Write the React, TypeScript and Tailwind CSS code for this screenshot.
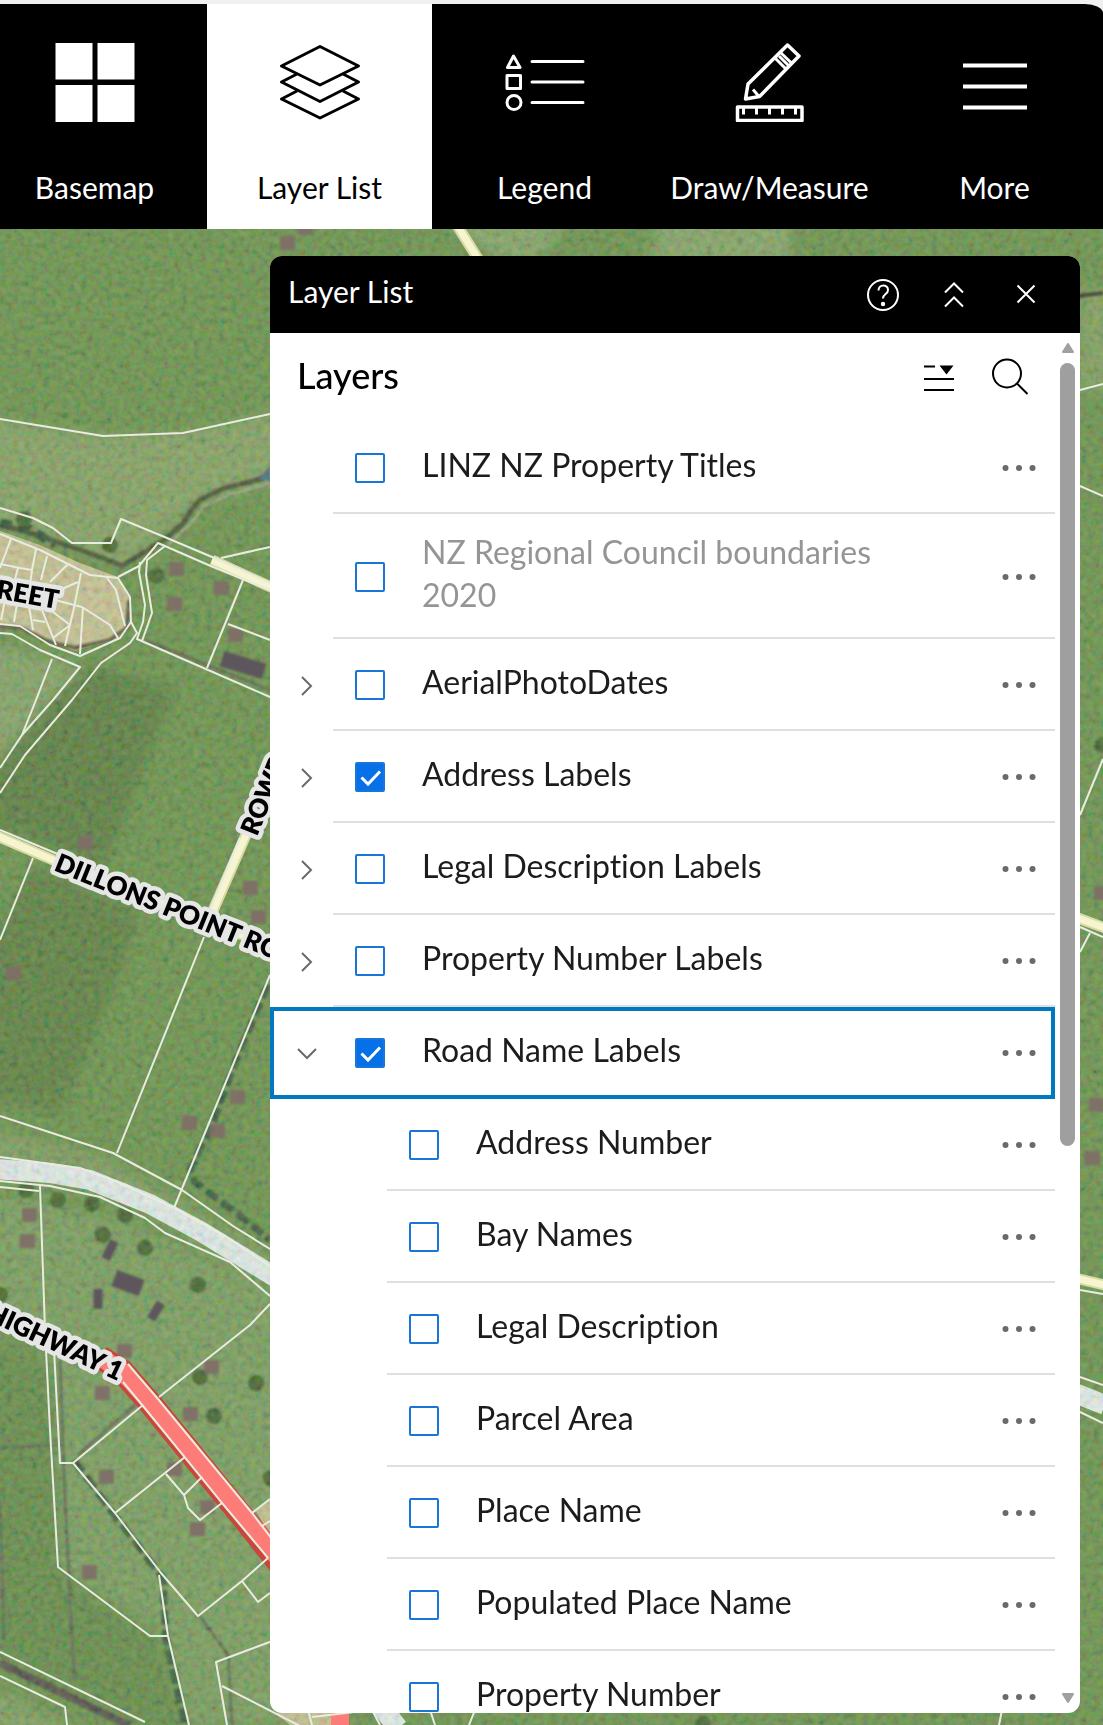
import { useState } from 'react';
import type { ReactNode } from 'react';

interface Layer {
  id: string;
  title: string;
  checked?: boolean;
  dimmed?: boolean;
  children?: Layer[];
}

const LAYERS: Layer[] = [
  { id: 'titles', title: 'LINZ NZ Property Titles' },
  { id: 'council', title: 'NZ Regional Council boundaries 2020', dimmed: true },
  { id: 'photo', title: 'AerialPhotoDates', children: [] },
  { id: 'address', title: 'Address Labels', checked: true, children: [] },
  { id: 'legal', title: 'Legal Description Labels', children: [] },
  { id: 'number', title: 'Property Number Labels', children: [] },
  {
    id: 'road',
    title: 'Road Name Labels',
    checked: true,
    children: [
      { id: 'road-address', title: 'Address Number' },
      { id: 'road-bay', title: 'Bay Names' },
      { id: 'road-legal', title: 'Legal Description' },
      { id: 'road-parcel', title: 'Parcel Area' },
      { id: 'road-place', title: 'Place Name' },
      { id: 'road-populated', title: 'Populated Place Name' },
      { id: 'road-property', title: 'Property Number' },
    ],
  },
];

const HOUSES: [number, number][] = [
  [176, 569], [221, 588], [174, 604], [235, 635], [85, 843], [13, 973], [250, 888], [258, 917],
  [237, 1097], [189, 1123], [217, 1131], [29, 1215], [27, 1241], [124, 1351], [211, 1367],
  [102, 1393], [190, 1414], [106, 1477], [174, 1469], [207, 1507], [197, 1529], [89, 1572],
  [305, 228], [287, 243], [1101, 893], [1096, 1105], [1092, 1158],
];

const TREES: [number, number][] = [
  [103, 1235], [145, 1248], [198, 1285], [200, 1377], [256, 1383], [214, 1416], [58, 1200],
  [92, 1204], [125, 1215], [156, 576], [110, 545], [24, 519], [26, 1190], [703, 1724], [1103, 745],
  [271, 1478], [0, 1295],
];

// x, y, width, height, rotation
const BARNS: [number, number, number, number, number][] = [
  [243, 665, 44, 16, 17],
  [128, 1283, 29, 17, 20],
  [110, 1250, 9, 20, 25],
  [98, 1299, 9, 20, 0],
  [156, 1311, 9, 19, 32],
];

const PARCELS = [
  'M0 419 103 436 183 433 270 414',
  'M0 508 33 518 53 528 72 543 111 543 121 519 167 538 212 557 270 583',
  'M221 558 270 547',
  'M118 577 139 566 158 543 213 567 270 590',
  'M140 562 139 572 145 605 143 622 137 639 270 697',
  'M165 546 147 560 146 575 152 613 142 641',
  'M243 580 207 668M228 624 270 640',
  'M0 534 40 550 90 575 118 578 130 597 131 622 120 638 80 656 50 645 20 626 0 624',
  'M0 633 12 634 40 650 80 667 53 700 22 735 0 768',
  'M52 659 36 700 22 735',
  'M131 622 137 633 130 643 101 663 72 700 25 755 0 793',
  'M11 539 0 568M36 549 32 570 28 600 33 630M0 564 20 568 32 570M18 568 12 590M47 556 41 580M68 564 50 582M81 573 73 612 65 646M53 593 78 582M55 600 82 607 110 625 118 638M83 607 80 654M53 612 70 625 53 638M42 610 56 645M5 600 1 620M17 604 14 622M33 620 45 622M107 578 116 590 125 626',
  'M33 858 0 940M204 937 117 1153M270 975 174 1208',
  'M0 830 60 855M240 838 210 910',
  'M0 1116 113 1153 182 1190 233 1226 270 1249',
  'M0 1157 80 1168 120 1183 174 1208 225 1236 270 1266',
  'M0 1181 50 1186 100 1197 145 1218 165 1233 230 1262 270 1296',
  'M0 1187 39 1191M40 1186 45 1330 50 1430 58 1567 150 1636 168 1636',
  'M54 1350 60 1463 73 1463 143 1405M270 1304 250 1325 159 1397',
  'M73 1463 115 1513 161 1573 198 1616 242 1581 268 1558M242 1581 258 1602 270 1593',
  'M115 1513 185 1457M166 1474 184 1495 188 1508 200 1520 222 1503M184 1495 202 1477',
  'M159 1575 168 1636 189 1725M0 1652 145 1722M0 1676 65 1707 67 1725',
  'M275 1640 216 1662 227 1725M222 1686 300 1726',
  'M128 1364 158 1399 252 1513 275 1543M123 1382 143 1406 222 1503 268 1558',
  'M252 1513 270 1499M262 1526 270 1521',
  'M1080 390 1103 384M1080 486 1103 496M1080 815 1103 759M1080 927 1103 937M1080 952 1090 933',
  'M1080 1290 1103 1294M1080 1377 1103 1385M1080 1412 1103 1423',
  'M430 1710 435 1725M475 1710 469 1725M1002 1710 999 1725M308 1710 312 1725M312 1717 372 1710 380 1725',
];

function MapLabel({ x, y, angle, end, children }: { x: number; y: number; angle: number; end?: boolean; children: string }) {
  return (
    <text
      transform={`translate(${x} ${y}) rotate(${angle})`}
      textAnchor={end ? 'end' : 'start'}
      className="fill-black stroke-[#e6e6e6] text-[26px] font-extrabold"
      strokeWidth="9"
      strokeLinejoin="round"
      paintOrder="stroke"
    >
      {children}
    </text>
  );
}

function AerialMap() {
  return (
    <svg
      viewBox="0 229 1103 1496"
      preserveAspectRatio="xMinYMin slice"
      className="absolute inset-0 h-full w-full"
      role="img"
      aria-label="Aerial map"
    >
      <defs>
        <filter id="grass" x="0" y="0" width="100%" height="100%">
          <feTurbulence type="fractalNoise" baseFrequency="0.16" numOctaves="3" seed="4" />
          <feColorMatrix values="1.8 0 0 0 -0.35  0 1.3 0 0 -0.15  0 0 1.2 0 -0.22  0 0 0 0 0.2" />
        </filter>
        <filter id="soft" x="-20%" y="-20%" width="140%" height="140%">
          <feGaussianBlur stdDeviation="1.3" />
        </filter>
        <filter id="field" x="-20%" y="-20%" width="140%" height="140%">
          <feGaussianBlur stdDeviation="6" />
        </filter>
      </defs>

      <rect y="229" width="1103" height="1496" fill="#628e48" />
      <g filter="url(#field)">
        <path d="M-20 419 103 436 183 433 290 410V480L200 500 122 566 60 540-20 520Z" fill="#7d9e61" />
        <path d="M-20 640 80 667 0 780-20 780Z" fill="#7b9f63" />
        <path d="M60 690 90 665 175 690 150 750 105 870-20 820V780Z" fill="#537a3d" />
        <path d="M33 865 140 915 110 1000 60 1115-20 1095V960Z" fill="#557c3e" />
        <path d="M-20 1125 110 1160 270 1255V1290L130 1200-20 1170Z" fill="#77985b" />
        <path d="M-20 1190 120 1220 290 1300V1725H190L168 1636 58 1567 45 1340-20 1320Z" fill="#71995a" />
        <path d="M-20 1340 55 1370 60 1567 150 1636 185 1725H130L-20 1650Z" fill="#5b8744" />
        <path d="M0 1690 100 1740H-20Z" fill="#769a5d" />
        <path d="M430 215H570L540 260H500ZM660 215H790V262H650Z" fill="#7ba063" />
        <path d="M1080 290H1110V390H1080Z" fill="#799b5c" />
      </g>

      <path d="M0 531 40 545 80 563 118 577 129 597 130 625 115 640 75 651 45 639 20 625 0 624Z" fill="#c2c092" />
      <path d="M275 1713H335V1725H290ZM256 1511 270 1500V1535Z" fill="#bebc8f" />

      <g fill="none" filter="url(#soft)">
        <path d="M264 478 225 488 200 500 190 512 182 525 165 539 145 552 122 566 100 557 60 543 30 533 0 525" stroke="#3f4d30" strokeWidth="5" />
        <path d="M270 483 228 495 204 506 190 524 168 545" stroke="#a3a78c" strokeWidth="2" />
        <path d="M0 626 20 628 50 642 75 648 110 640 127 628 129 600" stroke="#54573c" strokeWidth="4" />
        <path d="M145 640 200 662 270 690" stroke="#556049" strokeWidth="3" />
        <path d="M268 985 240 1050 210 1130 190 1170 195 1182 235 1212 270 1240" stroke="#31563a" strokeWidth="7" strokeDasharray="14 5" />
        <path d="M74 1460 115 1516 163 1578 166 1640 185 1725" stroke="#31583a" strokeWidth="7" strokeDasharray="15 5" />
        <path d="M0 523 30 529 55 545" stroke="#2b4f31" strokeWidth="9" strokeDasharray="12 7" />
        <path d="M60 1360 65 1500 72 1640 75 1680M0 1448 62 1445M0 1500 4 1640M200 1616 228 1655 232 1725M78 1455 135 1405" stroke="#536750" strokeWidth="3" />
        <path d="M0 1663 70 1697 130 1726" stroke="#4b4c47" strokeWidth="8" />
        <path d="M1078 296 1103 293" stroke="#2f3525" strokeWidth="4" />
      </g>
      <path d="M258 479 270 466V481Z" fill="#3d6283" filter="url(#soft)" />
      <g fill="#3b5f2b" filter="url(#soft)">
        {TREES.map(([x, y]) => (
          <circle key={`${x}-${y}`} cx={x} cy={y} r="8" />
        ))}
      </g>
      <path d="M-5 1169 50 1173 90 1180 150 1204 200 1231 275 1277M1075 1393 1105 1405M380 1705 398 1728" fill="none" stroke="#deecec" strokeWidth="20" />

      <rect y="229" width="1103" height="1496" filter="url(#grass)" />

      <g fill="#806d68" opacity="0.9" filter="url(#soft)">
        {HOUSES.map(([x, y]) => (
          <rect key={`${x}-${y}`} x={x - 7} y={y - 7} width="15" height="14" />
        ))}
      </g>
      <g fill="#5d575b" filter="url(#soft)">
        {BARNS.map(([x, y, w, h, r]) => (
          <rect key={`${x}-${y}`} x={x - w / 2} y={y - h / 2} width={w} height={h} transform={`rotate(${r} ${x} ${y})`} />
        ))}
      </g>

      <g fill="none">
        <path d="M-5 835 53 860 270 946M246 835 212 913M212 560 275 589M455 222 480 262M1075 917 1105 928M1075 1278 1105 1285" stroke="#d9dba6" strokeWidth="11" />
        <path d="M-5 835 53 860 270 946M246 835 212 913M212 560 275 589M455 222 480 262M1075 917 1105 928M1075 1278 1105 1285" stroke="#f6f5d0" strokeWidth="7" />
        <path d="M100 1357 122 1371 150 1403 237 1510 280 1564" stroke="#c8473a" strokeWidth="24" />
        <path d="M100 1357 122 1371 150 1402 238 1508 280 1560M340 1705V1728" stroke="#fd7c77" strokeWidth="18" />
        <g stroke="#e9ece0" strokeWidth="2" strokeLinejoin="round">
          {PARCELS.map(d => (
            <path key={d} d={d} />
          ))}
        </g>
      </g>

      <MapLabel x={57} y={609} angle={10} end>REET</MapLabel>
      <MapLabel x={257} y={837} angle={-68}>ROWD</MapLabel>
      <MapLabel x={53} y={870} angle={22}>DILLONS POINT ROAD</MapLabel>
      <MapLabel x={118} y={1381} angle={25} end>HIGHWAY 1</MapLabel>
    </svg>
  );
}

function ToolIcon({ children }: { children: ReactNode }) {
  return (
    <svg viewBox="0 0 84 80" className="h-20 w-21" fill="none" stroke="currentColor" strokeWidth="3" strokeLinejoin="round" aria-hidden="true">
      {children}
    </svg>
  );
}

const TOOLS: { label: string; inset?: string; icon: ReactNode }[] = [
  {
    label: 'Basemap',
    inset: 'pr-[18px]',
    icon: <path fill="currentColor" stroke="none" d="M2.500 1h37v36.500h-37zM44.500 1h37v36.500h-37zM2.500 43h37v37h-37zM44.500 43h37v37h-37z" />,
  },
  {
    label: 'Layer List',
    icon: <path d="M42 4.500 3.500 24 42 43 80.500 24ZM19 32 3.500 40 42 59.500 80.500 40 65 32M19 49 3.500 57 42 76 80.500 57 65 49" />,
  },
  {
    label: 'Legend',
    icon: (
      <>
        <path d="M10.500 14 4.500 25.500h12.500zM4 33.500h13.500v13H4z" />
        <circle cx="11" cy="60.500" r="7" />
        <path strokeLinecap="round" d="M29 19.500h51M29 40h51M29 60.500h51" />
      </>
    ),
  },
  {
    label: 'Draw/Measure',
    icon: (
      <>
        <path strokeWidth="3.500" d="M59.500 3 71 14 31.500 54.500 17.500 57 20 42ZM9.500 65h64.500v13.500H9.500z" />
        <path d="M47.500 16.500 59 28M53 11 64.500 22M51 14 61.500 24.500M25 47.500l6 7M15.500 65v7.500M28.500 65v7.500M41.500 65v7.500M54.500 65v7.500M67.500 65v7.500" />
      </>
    ),
  },
  {
    label: 'More',
    inset: 'pl-1',
    icon: <path strokeWidth="4" d="M10 23.500h64M10 44.500h64M10 65.500h64" />,
  },
];

function Toolbar() {
  const [active, setActive] = useState('Layer List');

  return (
    <nav className="grid grid-cols-[207fr_225fr_225fr_225fr_221fr] overflow-hidden rounded-tr-[18px_9px] bg-black">
      {TOOLS.map(t => (
        <button
          key={t.label}
          onClick={() => setActive(t.label)}
          className={
            'flex flex-col items-center pt-[38px] pb-[22px] text-[30px] leading-10 ' + (t.inset ?? '') +
            (active === t.label ? ' bg-white text-black' : ' text-white')
          }
        >
          <ToolIcon>{t.icon}</ToolIcon>
          <span className="mt-[45px]">{t.label}</span>
        </button>
      ))}
    </nav>
  );
}

interface RowProps {
  layer: Layer;
  nested?: boolean;
  selected: string;
  onSelect: (id: string) => void;
}

function LayerRow({ layer, nested = false, selected, onSelect }: RowProps) {
  const [checked, setChecked] = useState(!!layer.checked);
  const [open, setOpen] = useState(!!layer.children?.length);
  const focused = selected === layer.id;

  return (
    <li>
      <div
        onClick={() => onSelect(layer.id)}
        className={'flex min-h-[92px] pt-0.5 ' + (nested ? 'pl-[54px]' : '') + (focused ? ' outline-4 -outline-offset-4 outline-[#0079c1]' : '')}
      >
        <div className="flex w-[63px] shrink-0 items-center justify-center pl-2.5">
          {layer.children && (
            <button onClick={() => setOpen(!open)} aria-label={'Expand ' + layer.title} aria-expanded={open}>
              <svg viewBox="0 0 24 24" className={'size-6 text-[#6a6a6a] ' + (open ? 'rotate-90' : '')} fill="none" stroke="currentColor" strokeWidth="2">
                <path d="m7 3 9 9-9 9" />
              </svg>
            </button>
          )}
        </div>
        <div className={'flex min-w-0 flex-1 items-center border-b-2 pl-[22px] ' + (focused ? 'border-transparent' : 'border-[#dfdfdf]')}>
          <span className="grid shrink-0">
            <input
              id={layer.id}
              type="checkbox"
              checked={checked}
              onChange={e => setChecked(e.target.checked)}
              className="col-start-1 row-start-1 size-[30px] appearance-none rounded-xs border-2 border-[#1a75d9] bg-white checked:bg-[#0670e8]"
            />
            {checked && (
              <svg viewBox="0 0 30 30" className="pointer-events-none col-start-1 row-start-1 size-[30px]" fill="none" stroke="#fff" strokeWidth="3">
                <path d="m6.500 15.500 6.500 6.500 12-12.500" />
              </svg>
            )}
          </span>
          <label
            htmlFor={layer.id}
            className={'min-w-0 flex-1 pt-[14px] pr-8 pb-[21px] pl-[37px] text-[32px] leading-[43px] ' + (layer.dimmed ? 'text-[#959595]' : 'text-[#1c1c1c]')}
          >
            {layer.title}
          </label>
          <button className="flex w-[72px] shrink-0 justify-center py-4" aria-label={'Options for ' + layer.title}>
            <svg viewBox="0 0 36 8" className="h-2 w-9" fill="#6a6a6a">
              <circle cx="4.500" cy="4" r="3" />
              <circle cx="18" cy="4" r="3" />
              <circle cx="31.500" cy="4" r="3" />
            </svg>
          </button>
        </div>
      </div>
      {open && !!layer.children?.length && (
        <ul>
          {layer.children.map(c => (
            <LayerRow key={c.id} layer={c} nested selected={selected} onSelect={onSelect} />
          ))}
        </ul>
      )}
    </li>
  );
}

function LayerPanel() {
  const [selected, setSelected] = useState('road');

  return (
    <section className="relative mt-[27px] mr-[23px] mb-3 ml-[270px] flex min-h-0 flex-1 flex-col overflow-hidden rounded-xl bg-white">
      <header className="flex shrink-0 items-center bg-black pt-[15px] pr-9 pb-[22px] pl-[18px] text-white">
        <h1 className="flex-1 text-[30px] leading-10">Layer List</h1>
        <div className="flex items-center gap-9">
          <button aria-label="Help">
            <svg viewBox="0 0 36 40" className="h-10 w-9" fill="none" stroke="currentColor" strokeWidth="2">
              <circle cx="19" cy="24" r="15" />
              <path d="M14.500 19.500c0-7 9.500-6.500 9.500-.5 0 4.500-5 3.500-5 8.500" />
              <circle cx="19" cy="33" r="2.200" fill="currentColor" stroke="none" />
            </svg>
          </button>
          <button aria-label="Collapse">
            <svg viewBox="0 0 36 40" className="h-10 w-9" fill="none" stroke="currentColor" strokeWidth="2">
              <path d="m9 21.500 9-9 9 9M9 35.500l9-9 9 9" />
            </svg>
          </button>
          <button aria-label="Close">
            <svg viewBox="0 0 36 40" className="h-10 w-9" fill="none" stroke="currentColor" strokeWidth="2">
              <path d="m9.500 14.500 17 17M26.500 14.500l-17 17" />
            </svg>
          </button>
        </div>
      </header>

      <div className="flex min-h-0 flex-1">
        <div className="min-w-0 flex-1 overflow-y-auto [scrollbar-width:none]">
          <div className="flex items-start pt-5 pr-[26px] pb-[25px] pl-[27px]">
            <h2 className="flex-1 text-4xl/11 font-medium text-black">Layers</h2>
            <button className="mr-[34px]" aria-label="Filter layers">
              <svg viewBox="0 0 32 44" className="h-11 w-8" fill="none" stroke="#000" strokeWidth="2">
                <path d="M1 13.500h11M1 26h30M1 37h30" />
                <path d="M16.500 12.500h14l-7 9z" fill="#000" stroke="none" />
              </svg>
            </button>
            <button aria-label="Search layers">
              <svg viewBox="0 0 40 44" className="h-11 w-10" fill="none" stroke="#000" strokeWidth="2">
                <circle cx="18" cy="20.500" r="14" />
                <path d="m28 30.500 10.500 10.500" />
              </svg>
            </button>
          </div>
          <ul>
            {LAYERS.map(l => (
              <LayerRow key={l.id} layer={l} selected={selected} onSelect={setSelected} />
            ))}
          </ul>
        </div>

        <div className="flex w-[25px] shrink-0 flex-col items-center py-[10px]" aria-hidden="true">
          <svg viewBox="0 0 12 10" className="h-[10px] w-3" fill="#a0a0a0" stroke="#a0a0a0" strokeWidth="2" strokeLinejoin="round">
            <path d="m6 1 5 8H1z" />
          </svg>
          <div className="my-[10px] w-full flex-1">
            <div className="mx-auto h-[59.3%] w-[15px] rounded-full bg-[#9f9f9f]" />
          </div>
          <svg viewBox="0 0 12 10" className="h-[10px] w-3" fill="#a0a0a0" stroke="#a0a0a0" strokeWidth="2" strokeLinejoin="round">
            <path d="m6 9 5-8H1z" />
          </svg>
        </div>
      </div>
    </section>
  );
}

export default function App() {
  return (
    <div className="flex h-screen flex-col bg-[#f0f0f0] pt-1 font-[Lato,sans-serif] [font-variant-ligatures:none]">
      <Toolbar />
      <main className="relative flex min-h-0 flex-1 flex-col">
        <AerialMap />
        <LayerPanel />
      </main>
    </div>
  );
}
